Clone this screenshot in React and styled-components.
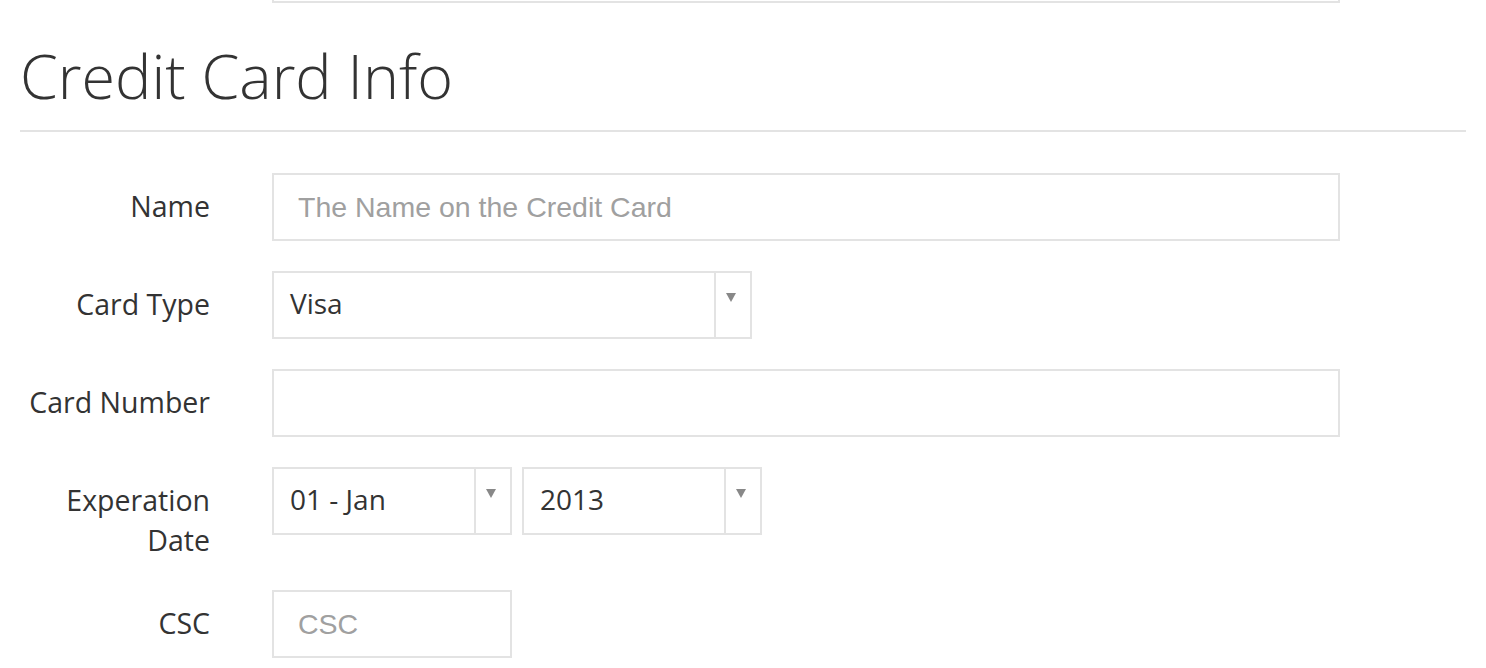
import React from 'react';
import styled, { createGlobalStyle } from 'styled-components';

const GlobalStyle = createGlobalStyle`
  html, body {
    margin: 0;
    padding: 0;
    background: #fff;
  }
  body {
    font-family: "Open Sans", "Liberation Sans", sans-serif;
    color: #333;
  }
`;

const Page = styled.div`
  padding: 0 20px;
  width: 1446px;
`;

const PrevField = styled.div`
  margin: -65px 0 0 252px;
  width: 1068px;
  height: 68px;
  box-sizing: border-box;
  border: 2px solid #e3e3e3;
`;

const Title = styled.h1`
  margin: 0;
  padding-top: 31px;
  padding-bottom: 12px;
  font-family: "Open Sans", sans-serif;
  font-weight: 300;
  font-size: 61px;
  line-height: 84px;
  color: #333;
  border-bottom: 2px solid #e3e3e3;
`;

const Form = styled.form`
  padding-top: 41px;
  display: flex;
  flex-direction: column;
  gap: 30px;
`;

const Row = styled.div`
  display: grid;
  grid-template-columns: 190px 1fr;
  column-gap: 62px;
  align-items: start;
`;

const Label = styled.label`
  padding-top: 13px;
  text-align: right;
  font-size: 28.5px;
  line-height: 40px;
  color: #333;
`;

const Controls = styled.div`
  display: flex;
  gap: 10px;
`;

const Input = styled.input`
  box-sizing: border-box;
  width: ${p => p.$width}px;
  height: 68px;
  margin: 0;
  padding: 0 24px;
  border: 2px solid #e3e3e3;
  border-radius: 0;
  outline: none;
  font-family: "Liberation Sans", Arial, sans-serif;
  font-size: 28.5px;
  color: #333;
  &::placeholder {
    color: #a0a0a0;
  }
`;

const Select = styled.div`
  box-sizing: border-box;
  width: ${p => p.$width}px;
  height: 68px;
  border: 2px solid #e3e3e3;
  display: flex;
`;

const SelectValue = styled.div`
  flex: 1;
  padding-left: 16px;
  font-size: 28px;
  line-height: 60px;
  color: #333;
`;

const ArrowBox = styled.div`
  width: 34px;
  border-left: 2px solid #e3e3e3;
  display: flex;
  justify-content: center;
  padding-top: 20px;
  box-sizing: content-box;
  &::after {
    content: '';
    width: 0;
    height: 0;
    border-left: 5px solid transparent;
    border-right: 5px solid transparent;
    border-top: 9px solid #888;
    margin-left: -4px;
  }
`;

const Dropdown = ({ value, width }) => (
  <Select $width={width}>
    <SelectValue>{value}</SelectValue>
    <ArrowBox />
  </Select>
);

export default function App() {
  return (
    <Page>
      <GlobalStyle />
      <PrevField />
      <Title>Credit Card Info</Title>
      <Form>
        <Row>
          <Label>Name</Label>
          <Controls>
            <Input $width={1068} placeholder="The Name on the Credit Card" />
          </Controls>
        </Row>
        <Row>
          <Label>Card Type</Label>
          <Controls>
            <Dropdown value="Visa" width={480} />
          </Controls>
        </Row>
        <Row>
          <Label>Card Number</Label>
          <Controls>
            <Input $width={1068} />
          </Controls>
        </Row>
        <Row>
          <Label>Experation Date</Label>
          <Controls>
            <Dropdown value="01 - Jan" width={240} />
            <Dropdown value="2013" width={240} />
          </Controls>
        </Row>
        <Row>
          <Label>CSC</Label>
          <Controls>
            <Input $width={240} placeholder="CSC" />
          </Controls>
        </Row>
      </Form>
    </Page>
  );
}
